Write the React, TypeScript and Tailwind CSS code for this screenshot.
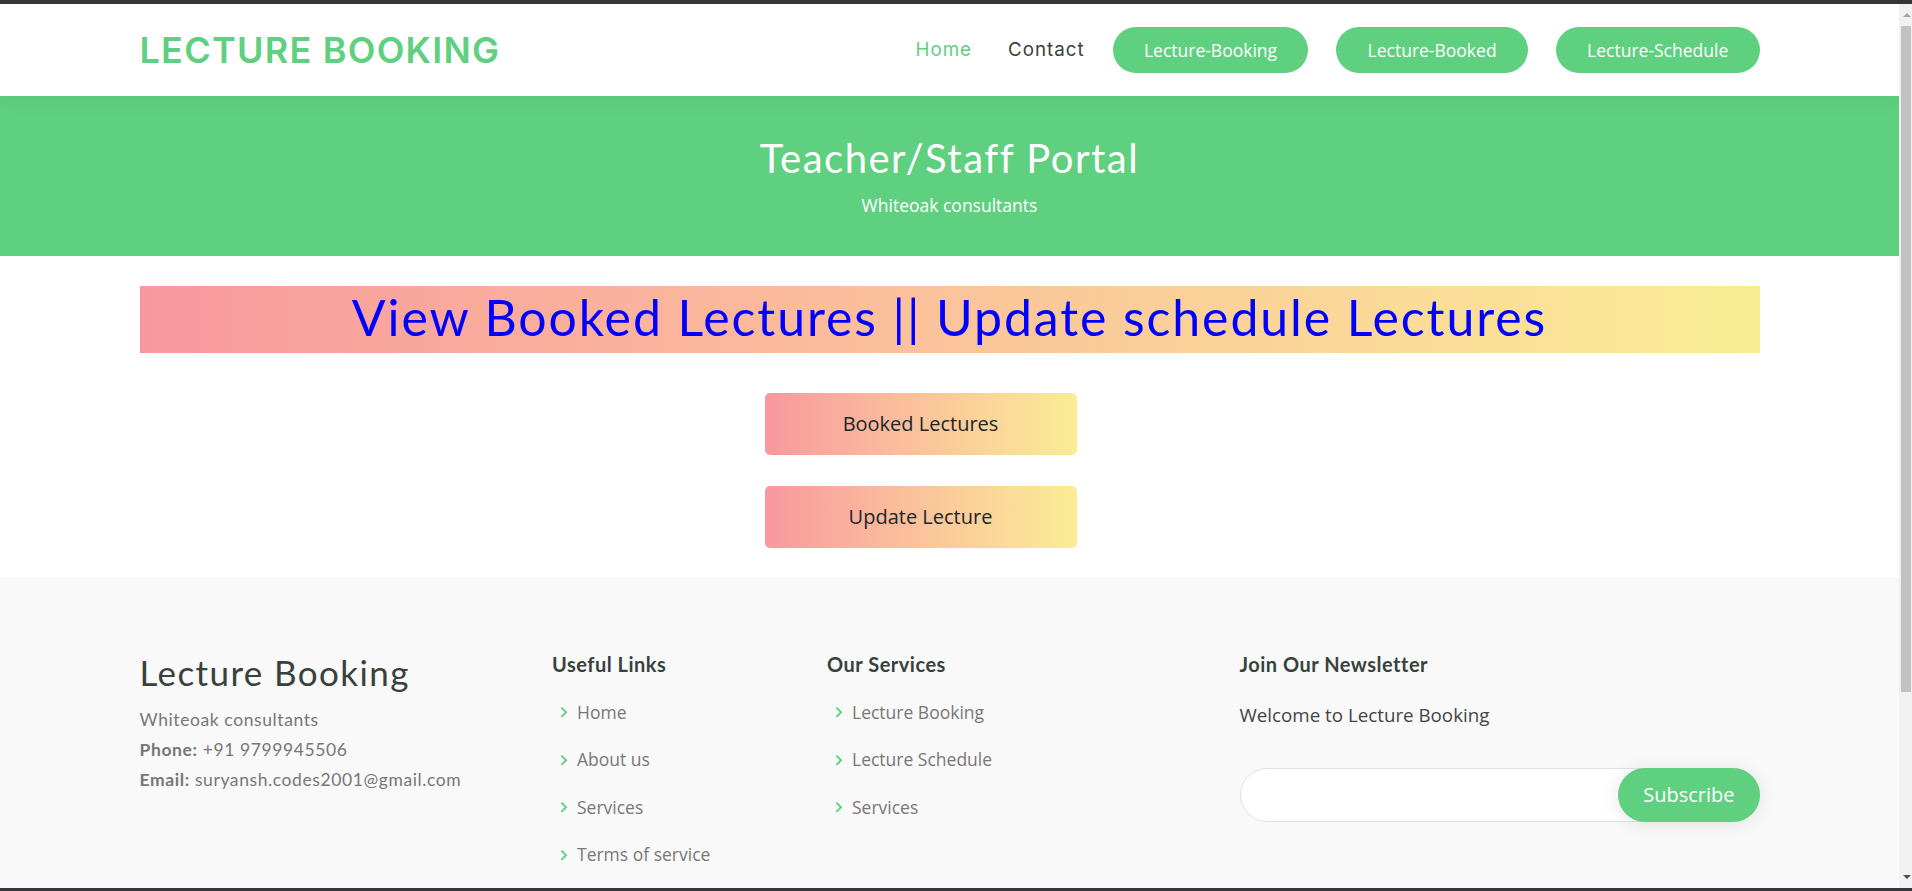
import React from 'react'

const sans = "font-['Open_Sans',sans-serif]"
const raleway = "font-['Lato',sans-serif]"
const poppins = "font-['Inter',sans-serif]"

function Chevron() {
  return (
    <svg viewBox="0 0 24 24" className="w-[22.5px] h-[22.5px] shrink-0 mr-[2.5px]" fill="#5fcf80">
      <path d="M10.707 17.707 16.414 12l-5.707-5.707-1.414 1.414L13.586 12l-4.293 4.293z" />
    </svg>
  )
}

function LinkList({ items }: { items: string[] }) {
  return (
    <ul>
      {items.map((t, i) => (
        <li key={i} className={`flex items-center ${i === 0 ? 'pb-[12.5px]' : 'py-[12.5px]'}`}>
          <Chevron />
          <a className={`${sans} text-[17.5px] leading-none text-[#777777]`}>{t}</a>
        </li>
      ))}
    </ul>
  )
}

function FooterTitle({ children }: { children: React.ReactNode }) {
  return (
    <h4 className={`${raleway} text-[20px] font-bold leading-[24px] tracking-[0.5px] pb-[15px] mb-[10px] text-[#37423b]`}>
      {children}
    </h4>
  )
}

function Scrollbar() {
  return (
    <div className="w-[13px] shrink-0 bg-[#f1f1f1] flex flex-col">
      <div className="h-[22px] flex items-center justify-center pl-[2px]">
        <div className="w-0 h-0 border-l-[4px] border-r-[4px] border-b-[4px] border-l-transparent border-r-transparent border-b-[#a3a3a3]" />
      </div>
      <div className="ml-[2px] w-[10px] h-[666px] bg-[#c1c1c1]" />
      <div className="flex-1" />
      <div className="h-[22px] flex items-center justify-center pl-[2px]">
        <div className="w-0 h-0 border-l-[4px] border-r-[4px] border-t-[4px] border-l-transparent border-r-transparent border-t-[#505050]" />
      </div>
    </div>
  )
}

export default function App() {
  const navBtns = ['Lecture-Booking', 'Lecture-Booked', 'Lecture-Schedule']

  return (
    <div className="w-full h-[891px] flex flex-col overflow-hidden bg-[#35363a]">
      <div className="h-[4px] shrink-0" />
      <div className="flex flex-1 min-h-0">
        <div className="flex-1 min-w-0 overflow-hidden bg-white flex flex-col">
          {/* Header */}
          <header className="h-[92px] shrink-0 flex items-center relative z-10 bg-white shadow-[0_0_22px_rgba(55,66,59,0.08)]">
            <div className="w-[1620px] mx-auto flex items-center justify-between">
              <h1 className={`${poppins} text-[36px] font-semibold uppercase tracking-[1.25px] leading-none text-[#5fcf80]`}>
                Lecture Booking
              </h1>
              <nav className="flex items-center">
                <a className={`${poppins} text-[18.75px] tracking-[1px] text-[#5fcf80]`}>Home</a>
                <a className={`${poppins} ml-[36px] text-[18.75px] tracking-[1px] text-[#37423b]`}>Contact</a>
                {navBtns.map(b => (
                  <a
                    key={b}
                    className={`${sans} ml-[28px] px-[31.25px] py-[10px] rounded-full bg-[#5fcf80] text-white text-[17.5px] leading-[26.25px] whitespace-nowrap`}
                  >
                    {b}
                  </a>
                ))}
              </nav>
            </div>
          </header>

          {/* Breadcrumbs */}
          <section className="h-[160px] shrink-0 bg-[#5fcf80] flex flex-col items-center justify-center text-white">
            <h2 className={`${raleway} text-[40px] leading-[48px] tracking-[1.5px] mb-[10px]`}>Teacher/Staff Portal</h2>
            <p className={`${sans} text-[17.5px] leading-[26.25px]`}>Whiteoak consultants</p>
          </section>

          {/* Main */}
          <main className="shrink-0 w-[1620px] mx-auto pt-[30px] pb-[29px]">
            <div className="h-[67px] bg-gradient-to-r from-[#f8989e] to-[#f9ed94] flex items-center justify-center pb-[5px]">
              <h1 className={`${raleway} text-[50px] leading-none tracking-[1.9px] text-[#0000ff]`}>
                View Booked Lectures || Update schedule Lectures
              </h1>
            </div>
            <div className="ml-[625px] mt-[40px] flex flex-col gap-[31px] w-[312px]">
              {['Booked Lectures', 'Update Lecture'].map(t => (
                <button
                  key={t}
                  className={`${sans} h-[62px] w-[312px] rounded-[5px] bg-gradient-to-r from-[#f8989e] to-[#f9ed94] text-[20px] text-[#212529]`}
                >
                  {t}
                </button>
              ))}
            </div>
          </main>

          {/* Footer */}
          <footer className="flex-1 bg-[#f9f9f9] pt-[75px]">
            <div className="w-[1620px] mx-auto grid grid-cols-[382.5px_245px_382.5px_520px] gap-x-[30px]">
              <div>
                <h3 className={`${raleway} text-[35px] leading-none tracking-[1.4px] py-[2.5px] mb-[12.5px] text-[#37423b]`}>Lecture Booking</h3>
                <p className={`${raleway} text-[17.5px] leading-[30px] tracking-[0.6px] text-[#777777]`}>
                  Whiteoak consultants
                  <br />
                  <strong>Phone:</strong> +91 9799945506
                  <br />
                  <strong>Email:</strong> suryansh.codes2001@gmail.com
                </p>
              </div>
              <div>
                <FooterTitle>Useful Links</FooterTitle>
                <LinkList items={['Home', 'About us', 'Services', 'Terms of service']} />
              </div>
              <div>
                <FooterTitle>Our Services</FooterTitle>
                <LinkList items={['Lecture Booking', 'Lecture Schedule', 'Services']} />
              </div>
              <div>
                <FooterTitle>Join Our Newsletter</FooterTitle>
                <p className={`${sans} text-[18.75px] leading-[28px] text-[#444444]`}>Welcome to Lecture Booking</p>
                <form className="mt-[39px] relative h-[54px] bg-white rounded-full border border-[#e1e1e1] px-[12.5px]">
                  <input type="email" className="h-full w-[360px] outline-none bg-transparent" />
                  <button
                    type="button"
                    className={`${sans} absolute -top-px -bottom-px -right-px px-[25px] rounded-full bg-[#5fcf80] text-white text-[20px] shadow-[0_2px_19px_rgba(0,0,0,0.1)]`}
                  >
                    Subscribe
                  </button>
                </form>
              </div>
            </div>
          </footer>
        </div>
        <Scrollbar />
      </div>
      <div className="h-[3px] shrink-0" />
    </div>
  )
}
